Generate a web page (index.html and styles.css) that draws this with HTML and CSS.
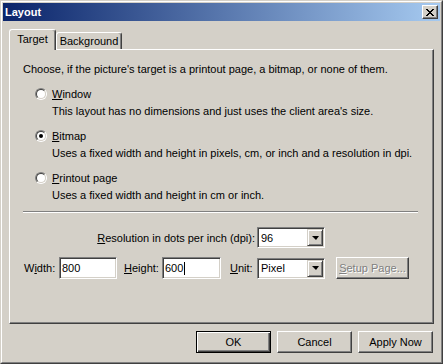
FILE: index.html
```html
<!DOCTYPE html>
<html lang="en">
<head>
  <meta charset="UTF-8">
  <title>Layout</title>
  <link rel="stylesheet" href="styles.css">
</head>
<body>

  <div class="window">
    <div class="frame">

      <!-- Title bar -->
      <div class="titlebar">
        <span class="title">Layout</span>
        <span class="close">
          <svg width="8" height="7" viewBox="0 0 8 7" shape-rendering="crispEdges">
            <path fill="#000" d="M0 0h2v1H0z M6 0h2v1H6z M1 1h2v1H1z M5 1h2v1H5z M2 2h4v1H2z M3 3h2v1H3z M2 4h4v1H2z M1 5h2v1H1z M5 5h2v1H5z M0 6h2v1H0z M6 6h2v1H6z"/>
          </svg>
        </span>
      </div>

      <div class="content">
        <!-- Tabs -->
        <div class="tabs">
          <div class="tab active">Target</div>
          <div class="tab tab-bg">Background</div>
        </div>

        <div class="panel">
          <p class="intro">Choose, if the picture's target is a printout page, a bitmap, or none of them.</p>

          <div class="option">
            <div class="choice"><span class="radio"></span><span><u>W</u>indow</span></div>
            <div class="desc">This layout has no dimensions and just uses the client area's size.</div>
          </div>
          <div class="option">
            <div class="choice"><span class="radio checked"></span><span><u>B</u>itmap</span></div>
            <div class="desc">Uses a fixed width and height in pixels, cm, or inch and a resolution in dpi.</div>
          </div>
          <div class="option">
            <div class="choice"><span class="radio"></span><span><u>P</u>rintout page</span></div>
            <div class="desc">Uses a fixed width and height in cm or inch.</div>
          </div>

          <div class="separator"></div>

          <div class="res-row">
            <span class="res-label"><u>R</u>esolution in dots per inch (dpi):</span>
            <span class="combo"><span class="combo-text">96</span><span class="drop"><span class="arrow"></span></span></span>
          </div>

          <div class="size-row">
            <span class="lbl lbl-width">W<u>i</u>dth:</span>
            <span class="field field-width">800</span>
            <span class="lbl lbl-height"><u>H</u>eight:</span>
            <span class="field field-height">600<span class="caret"></span></span>
            <span class="lbl lbl-unit"><u>U</u>nit:</span>
            <span class="combo"><span class="combo-text">Pixel</span><span class="drop"><span class="arrow"></span></span></span>
            <span class="btn setup-btn disabled"><u>S</u>etup Page...</span>
          </div>
        </div>

        <!-- Dialog buttons -->
        <div class="buttons">
          <span class="btn default">OK</span>
          <span class="btn">Cancel</span>
          <span class="btn">Apply Now</span>
        </div>
      </div>

    </div>
  </div>

</body>
</html>
```

FILE: styles.css
```css
body {
  margin: 0;
  background: #d4d0c8;
  font-family: "Liberation Sans", Arial, sans-serif;
  font-size: 11px;
  color: #000;
}

u {
  text-underline-offset: 1px;
}

.window {
  width: 443px;
  height: 364px;
  box-sizing: border-box;
  border: 1px solid;
  border-color: #d4d0c8 #404040 #404040 #d4d0c8;
}

.frame {
  height: 100%;
  box-sizing: border-box;
  border: 1px solid;
  border-color: #fff #808080 #808080 #fff;
  padding: 1px;
  display: flex;
  flex-direction: column;
}

.titlebar {
  height: 18px;
  background: linear-gradient(to right, #0a246a, #a6caf0);
  display: flex;
  align-items: center;
  justify-content: space-between;
  padding: 0 2px 0 2px;
}

.title {
  color: #fff;
  font-weight: bold;
}

.close {
  width: 16px;
  height: 14px;
  box-sizing: border-box;
  border: 1px solid;
  border-color: #fff #404040 #404040 #fff;
  box-shadow: inset -1px -1px #808080;
  background: #d4d0c8;
  display: flex;
  align-items: center;
  justify-content: center;
}

.content {
  flex: 1;
  padding: 8px 6px 0 6px;
  display: flex;
  flex-direction: column;
}

/* Tabs */
.tabs {
  display: flex;
  align-items: flex-end;
  height: 20px;
}

.tab {
  height: 17px;
  box-sizing: border-box;
  border: 1px solid #fff;
  border-right-color: #404040;
  border-bottom: none;
  border-radius: 3px 3px 0 0;
  box-shadow: inset -1px 0 #808080;
  text-align: center;
  line-height: 16px;
}

.tab.active {
  width: 47px;
  height: 21px;
  line-height: 19px;
  margin-bottom: -1px;
  position: relative;
  z-index: 1;
  background: #d4d0c8;
}

.tab-bg {
  width: 66px;
}

.panel {
  height: 275px;
  box-sizing: border-box;
  border: 1px solid;
  border-color: #fff #404040 #404040 #fff;
  box-shadow: inset -1px -1px #808080;
  padding: 13px 13px 0 13px;
}

.intro {
  margin: 0 0 11px 0;
  line-height: 13px;
}

.option + .option {
  margin-top: 11px;
}

.choice {
  display: flex;
  align-items: center;
  height: 13px;
  padding-left: 12px;
}

.desc {
  margin: 5px 0 0 29px;
  line-height: 13px;
}

/* Radio buttons */
.radio {
  width: 12px;
  height: 12px;
  margin-right: 5px;
  box-sizing: border-box;
  border-radius: 50%;
  border: 1px solid;
  border-color: #808080 #fff #fff #808080;
  position: relative;
}

.radio::before {
  content: "";
  position: absolute;
  inset: 0;
  border-radius: 50%;
  border: 1px solid;
  border-color: #404040 #d4d0c8 #d4d0c8 #404040;
  background: #fff;
}

.radio.checked::after {
  content: "";
  position: absolute;
  left: 3px;
  top: 3px;
  width: 4px;
  height: 4px;
  border-radius: 50%;
  background: #000;
}

.separator {
  margin: 9px 2px 0 0;
  border-top: 1px solid #808080;
  border-bottom: 1px solid #fff;
}

/* Resolution / size rows */
.res-row {
  margin-top: 14px;
  height: 21px;
  display: flex;
  align-items: center;
}

.res-label {
  width: 234px;
  box-sizing: border-box;
  padding-right: 2px;
  text-align: right;
}

.size-row {
  margin-top: 9px;
  height: 22px;
  display: flex;
  align-items: center;
}

.lbl-width {
  width: 36px;
  padding-left: 1px;
  box-sizing: border-box;
}

.lbl-height {
  width: 38px;
  margin-left: 7px;
}

.lbl-unit {
  width: 27px;
  margin-left: 9px;
}

.field {
  height: 22px;
  box-sizing: border-box;
  border: 1px solid;
  border-color: #808080 #fff #fff #808080;
  box-shadow: inset 1px 1px #404040, inset -1px -1px #d4d0c8;
  background: #fff;
  padding-left: 2px;
  line-height: 20px;
  display: flex;
  align-items: center;
}

.field-width {
  width: 58px;
}

.field-height {
  width: 59px;
}

.caret {
  width: 1px;
  height: 13px;
  background: #000;
  margin-left: 1px;
}

.combo {
  width: 68px;
  height: 21px;
  box-sizing: border-box;
  border: 1px solid;
  border-color: #808080 #fff #fff #808080;
  box-shadow: inset 1px 1px #404040, inset -1px -1px #d4d0c8;
  background: #fff;
  display: flex;
  align-items: center;
  padding: 1px;
}

.combo-text {
  flex: 1;
  padding-left: 2px;
}

.drop {
  width: 16px;
  height: 17px;
  box-sizing: border-box;
  border: 1px solid;
  border-color: #d4d0c8 #404040 #404040 #d4d0c8;
  box-shadow: inset 1px 1px #fff, inset -1px -1px #808080;
  background: #d4d0c8;
  display: flex;
  align-items: center;
  justify-content: center;
}

.arrow {
  width: 0;
  height: 0;
  border-left: 4px solid transparent;
  border-right: 3px solid transparent;
  border-top: 4px solid #000;
  margin-left: 1px;
}

/* Buttons */
.btn {
  width: 75px;
  height: 22px;
  box-sizing: border-box;
  border: 1px solid;
  border-color: #fff #404040 #404040 #fff;
  box-shadow: inset -1px -1px #808080;
  background: #d4d0c8;
  display: flex;
  align-items: center;
  justify-content: center;
}

.btn.default {
  border-color: #000;
  box-shadow: inset 1px 1px #fff, inset -1px -1px #404040, inset -2px -2px #808080;
}

.btn.disabled {
  color: #808080;
  text-shadow: 1px 1px #fff;
}

.setup-btn {
  width: 73px;
  margin-left: 11px;
}

.buttons {
  margin-top: 7px;
  display: flex;
  justify-content: flex-end;
  gap: 6px;
  padding-right: 1px;
}
```
